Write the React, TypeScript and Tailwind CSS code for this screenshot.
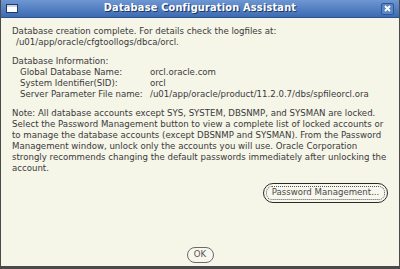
import { type FC } from "react";

const WindowIcon: FC = () => (
  <svg width="12" height="9" viewBox="0 0 12 9">
    <rect x="0.5" y="0.5" width="11" height="8" fill="#ffffff" stroke="#1f3a6a" />
    <rect x="1" y="1" width="10" height="2" fill="#c9d6ea" />
  </svg>
);

const CloseIcon: FC = () => (
  <div className="flex justify-center items-center bg-[#5a86c6] border border-[#2e5596] rounded-[2px] w-[13px] h-[12px]">
    <svg width="7" height="7" viewBox="0 0 7 7">
      <path d="M1 1 L6 6 M6 1 L1 6" stroke="#ffffff" strokeWidth="1.8" />
    </svg>
  </div>
);

const info = [
  ["Global Database Name:", "orcl.oracle.com"],
  ["System Identifier(SID):", "orcl"],
  ["Server Parameter File name:", "/u01/app/oracle/product/11.2.0.7/dbs/spfileorcl.ora"],
];

const App: FC = () => {
  return (
    <div className="flex flex-col bg-[#f5f5e8] border-[#4a4a4a] border-x border-b-[3px] w-[400px] h-[269px] overflow-hidden text-[#3a3a3a] [font-family:'DejaVu_Sans',sans-serif]">
      <div className="items-center grid grid-cols-[1fr_auto_1fr] bg-gradient-to-b from-[#6e97d2] to-[#3c6bb3] px-[4px] border-[#2c518f] border-b h-[18px] shrink-0">
        <div className="flex items-center pl-[1px]">
          <WindowIcon />
        </div>
        <div className="font-bold text-[9.8px] text-white [text-shadow:1px_1px_0_#1d3560] tracking-[0.2px]">
          Database Configuration Assistant
        </div>
        <div className="flex justify-end pr-[1px]">
          <CloseIcon />
        </div>
      </div>

      <div className="flex flex-col flex-1 px-[11px] pt-[8px] text-[8.6px] leading-[10.9px]">
        <div>Database creation complete. For details check the logfiles at:</div>
        <div className="pl-[4px]">/u01/app/oracle/cfgtoollogs/dbca/orcl.</div>
        <div className="mt-[8px]">Database Information:</div>
        <div className="grid grid-cols-[130px_1fr] pl-[8px]">
          {info.map(([label, value]) => (
            <div key={label} className="contents">
              <div>{label}</div>
              <div>{value}</div>
            </div>
          ))}
        </div>
        <div className="mt-[9px]">
          Note: All database accounts except SYS, SYSTEM, DBSNMP, and SYSMAN are locked.
          <br />
          Select the Password Management button to view a complete list of locked accounts or
          <br />
          to manage the database accounts (except DBSNMP and SYSMAN). From the Password
          <br />
          Management window, unlock only the accounts you will use. Oracle Corporation
          <br />
          strongly recommends changing the default passwords immediately after unlocking the
          <br />
          account.
        </div>

        <div className="flex justify-end mt-[9px] pr-[0px]">
          <button className="flex justify-center items-center bg-[#f7f7ee] p-[2px] border border-[#2b2b2b] rounded-full w-[125px] h-[20px]">
            <span className="flex justify-center items-center border border-[#555] border-dotted rounded-[6px] w-full h-full text-[#4a4a4a] text-[8.6px]">
              Password Management...
            </span>
          </button>
        </div>

        <div className="flex justify-center mt-[44px]">
          <button className="flex justify-center items-center bg-[#f7f7ee] border border-[#6a6a6a] rounded-full w-[27px] h-[16px] text-[#555] text-[8.6px]">
            OK
          </button>
        </div>
      </div>
    </div>
  );
};

export default App;
